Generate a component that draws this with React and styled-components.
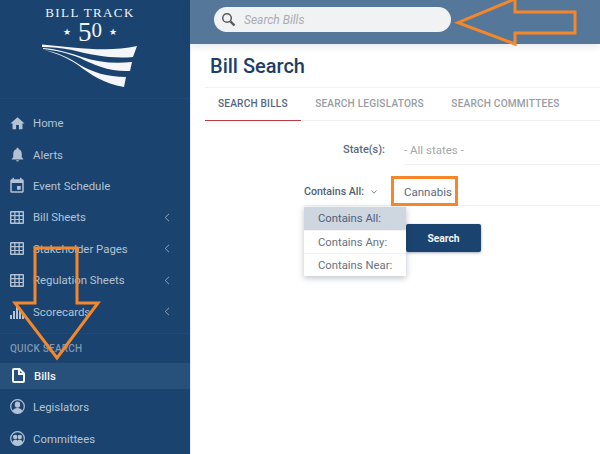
import React from 'react';
import styled, { createGlobalStyle } from 'styled-components';
import { MdHome, MdNotifications, MdEvent } from 'react-icons/md';

const GlobalStyle = createGlobalStyle`
  html, body {
    margin: 0;
    padding: 0;
    height: 454px;
    overflow: hidden;
    background: #fff;
    font-family: 'Roboto', 'Liberation Sans', sans-serif;
  }
`;

const Page = styled.div`
  position: relative;
  display: flex;
  width: 600px;
  height: 454px;
  overflow: hidden;
`;

/* SIDEBAR */
const Sidebar = styled.aside`
  flex: 0 0 190px;
  display: flex;
  flex-direction: column;
  background: #1a436f;
`;

const Logo = styled.div`
  height: 99px;
  flex: none;
  display: flex;
  flex-direction: column;
  align-items: center;
  padding: 6px 10px 0 0;
  box-sizing: border-box;
  border-bottom: 1px solid #1f4a78;
  color: #f2f5f8;
  font-family: 'Liberation Serif', serif;
`;

const LogoTitle = styled.div`
  font-size: 13px;
  line-height: 14px;
  letter-spacing: 1.4px;
`;

const LogoFifty = styled.div`
  display: flex;
  align-items: center;
  height: 24px;
  font-size: 27px;
  line-height: 24px;
`;

const LogoStar = styled.span`
  font-size: 9px;
  margin: 0 7px;
`;

const LogoZero = styled.span`
  font-size: 21px;
  margin-bottom: 4px;
`;

const Nav = styled.nav`
  flex: none;
  display: flex;
  flex-direction: column;
  padding-top: 8.6px;
`;

const NavRow = styled.div`
  height: 31.4px;
  flex: none;
  display: flex;
  align-items: center;
  padding-left: ${(p) => (p.$active ? '12px' : '10px')};
  gap: ${(p) => (p.$active ? '10px' : '9px')};
  background: ${(p) => (p.$active ? '#27507a' : 'transparent')};
  color: ${(p) => (p.$active ? '#f4f7fa' : '#b3c3d5')};
  font-size: 11.4px;
  font-weight: ${(p) => (p.$active ? 500 : 400)};
`;

const QuickRow = styled(NavRow)`
  height: ${(p) => (p.$active ? '26px' : '32px')};
  margin-bottom: ${(p) => (p.$active ? '2px' : '0')};
`;

const IconSlot = styled.span`
  flex: 0 0 ${(p) => (p.$active ? '12px' : '14px')};
  min-width: 0;
  display: flex;
  align-items: center;
  justify-content: center;

  svg {
    display: block;
    flex: none;
  }
`;

const NavLabel = styled.span`
  flex: 1;
`;

const Caret = styled.svg`
  width: 6px;
  height: 9px;
  margin-right: 20px;
  fill: none;
  stroke: #8fa6bf;
  stroke-width: 1;
`;

const Divider = styled.div`
  flex: none;
  border-top: 1px solid #21497a;
  margin-top: 5.6px;
`;

const QuickTitle = styled.div`
  height: 29px;
  flex: none;
  display: flex;
  align-items: center;
  padding-left: 10px;
  color: #7f98b3;
  font-size: 10px;
  font-weight: 500;
  letter-spacing: 0.2px;
`;

/* MAIN AREA */
const Main = styled.main`
  flex: 1;
  min-width: 0;
  display: flex;
  flex-direction: column;
  border-left: 1px solid #e4edf5;
`;

const TopBar = styled.header`
  height: 44px;
  flex: none;
  display: flex;
  align-items: center;
  padding-left: 24px;
  margin-left: -1px;
  background: #54779a;
  box-shadow: 0 2px 8px rgba(30, 50, 80, 0.12);
`;

const SearchBox = styled.div`
  width: 237px;
  height: 25px;
  margin-top: -5px;
  display: flex;
  align-items: center;
  gap: 8px;
  padding-left: 7px;
  box-sizing: border-box;
  border-radius: 13px;
  background: #f1f2f4;
  color: #a9adb2;
  font-size: 12px;
  font-style: italic;
`;

const Heading = styled.h1`
  margin: 0;
  height: 43px;
  flex: none;
  padding: 10px 0 0 19px;
  box-sizing: border-box;
  color: #1b3f69;
  font-size: 20px;
  font-weight: 500;
  line-height: 24px;
`;

const Tabs = styled.div`
  height: 34px;
  flex: none;
  display: flex;
  gap: 1.4px;
  margin-left: 14px;
  border-top: 1px solid #f2f3f5;
  border-bottom: 1px solid #eef0f2;
  box-sizing: border-box;
`;

const Tab = styled.div`
  height: 33px;
  display: flex;
  align-items: center;
  padding: 0 13px 2px;
  box-sizing: border-box;
  color: ${(p) => (p.$active ? '#52677f' : '#989ca3')};
  font-size: 10.1px;
  font-weight: 500;
  letter-spacing: 0.2px;
  border-bottom: ${(p) => (p.$active ? '1px solid #bd3b48' : 'none')};
`;

const Form = styled.div`
  display: flex;
  flex-direction: column;
  padding-left: 113px;
`;

const StateRow = styled.div`
  height: 44px;
  display: flex;
  align-items: center;
  box-sizing: border-box;
  padding-top: 14px;
  border-bottom: 1px solid transparent;
`;

const StateLabel = styled.label`
  width: 81px;
  text-align: right;
  color: #5a6b80;
  font-size: 11px;
  font-weight: 500;
`;

const StateValue = styled.div`
  flex: 1;
  align-self: stretch;
  display: flex;
  align-items: center;
  margin: -14px 0 -1px 19px;
  padding-top: 14px;
  border-bottom: 1px solid #eef0f2;
  color: #a3a7ad;
  font-size: 11.5px;
`;

const ContainsRow = styled.div`
  position: relative;
  height: 27px;
  margin-top: 13px;
  display: flex;
  align-items: center;
  border-bottom: 1px solid #eef0f2;
`;

const ContainsToggle = styled.div`
  width: 88px;
  display: flex;
  align-items: center;
  gap: 7px;
  color: #4f6178;
  font-size: 10.6px;
  font-weight: 500;
`;

const ContainsValue = styled.div`
  margin-left: 12px;
  color: #5d6b7c;
  font-size: 11.5px;
`;

const Menu = styled.ul`
  position: absolute;
  z-index: 2;
  top: 29px;
  left: 0;
  width: 102px;
  margin: 0;
  padding: 0;
  list-style: none;
  background: #fff;
  box-shadow: 0 2px 6px rgba(40, 50, 70, 0.3);
`;

const MenuItem = styled.li`
  height: 23px;
  display: flex;
  align-items: center;
  padding-left: 14px;
  box-sizing: border-box;
  background: ${(p) => (p.$selected ? '#ced6e0' : '#fff')};
  border-top: ${(p) => (p.$selected ? 'none' : '1px solid #f1f2f4')};
  color: ${(p) => (p.$selected ? '#4f6178' : '#69727f')};
  font-size: 11.3px;
`;

const SearchButton = styled.button`
  width: 75px;
  height: 28px;
  margin: 18px 0 0 102px;
  border: none;
  border-radius: 2px;
  background: #1a436f;
  box-shadow: 0 1px 3px rgba(30, 50, 80, 0.4);
  color: #f0f3f6;
  font-family: inherit;
  font-size: 10.3px;
  font-weight: 700;
`;

/* ORANGE ANNOTATIONS laid over the screenshot */
const Annotations = styled.svg`
  position: absolute;
  z-index: 3;
  inset: 0;
  width: 600px;
  height: 454px;
  pointer-events: none;
  fill: none;
  stroke: #f5872a;
  stroke-width: 3;
`;

const GridIcon = () => (
  <svg width="14" height="13" viewBox="0 0 14 13" fill="#b3c3d5">
    <path
      fillRule="evenodd"
      d="M1 0h12a1 1 0 0 1 1 1v11a1 1 0 0 1-1 1H1a1 1 0 0 1-1-1V1a1 1 0 0 1 1-1zm.4 1.4v2.7h2.8V1.4zm4.1 0v2.7h3V1.4zm4.3 0v2.7h2.8V1.4zM1.4 5.3v2.6h2.8V5.3zm4.1 0v2.6h3V5.3zm4.3 0v2.6h2.8V5.3zM1.4 9.1v2.5h2.8V9.1zm4.1 0v2.5h3V9.1zm4.3 0v2.5h2.8V9.1z"
    />
  </svg>
);

const BarsIcon = () => (
  <svg width="14" height="15" viewBox="0 0 14 15" fill="#b3c3d5">
    <path d="M0 11h2v4H0zM3 7h2v8H3zM6 0h2v15H6zM9 5h2v10H9zM12 9h2v6h-2z" />
  </svg>
);

const FileIcon = () => (
  <svg width="13" height="15" viewBox="0 0 13 15" fill="none" stroke="#f4f7fa" strokeWidth="2">
    <path d="M2 1h5.500L12 5.500V13a1 1 0 0 1-1 1H2a1 1 0 0 1-1-1V2a1 1 0 0 1 1-1z" />
    <path d="M7 1v5h5" />
  </svg>
);

const PersonIcon = () => (
  <svg width="15" height="15" viewBox="0 0 15 15">
    <circle cx="7.500" cy="7.500" r="6.800" fill="none" stroke="#b3c3d5" strokeWidth="1.200" />
    <ellipse cx="7.500" cy="5.600" rx="2.700" ry="3.200" fill="#b3c3d5" />
    <path d="M2.800 12c.6-2.300 2.600-3 4.700-3s4.100.7 4.700 3a6 6 0 0 1-9.400 0z" fill="#b3c3d5" />
  </svg>
);

const GroupIcon = () => (
  <svg width="15" height="15" viewBox="0 0 15 15">
    <circle cx="7.500" cy="7.500" r="6.800" fill="none" stroke="#b3c3d5" strokeWidth="1.200" />
    <circle cx="5.200" cy="6" r="2.200" fill="#b3c3d5" />
    <circle cx="9.800" cy="6" r="2.200" fill="#b3c3d5" />
    <path d="M2.300 11.500c.4-2 1.500-2.800 2.900-2.800s2.300.6 2.300 1.200c0-.6.900-1.200 2.300-1.200s2.500.8 2.900 2.800a6 6 0 0 1-10.400 0z" fill="#b3c3d5" />
  </svg>
);

const CaretLeft = () => (
  <Caret viewBox="0 0 6 9">
    <path d="M5 .8 1.200 4.500 5 8.200" />
  </Caret>
);

const navItems = [
  { label: 'Home', icon: <MdHome size={17} color="#b3c3d5" /> },
  { label: 'Alerts', icon: <MdNotifications size={17} color="#b3c3d5" /> },
  { label: 'Event Schedule', icon: <MdEvent size={18} color="#b3c3d5" /> },
  { label: 'Bill Sheets', icon: <GridIcon />, caret: true },
  { label: 'Stakeholder Pages', icon: <GridIcon />, caret: true },
  { label: 'Regulation Sheets', icon: <GridIcon />, caret: true },
  { label: 'Scorecards', icon: <BarsIcon />, caret: true },
];

const tabs = ['SEARCH BILLS', 'SEARCH LEGISLATORS', 'SEARCH COMMITTEES'];
const matchModes = ['Contains All:', 'Contains Any:', 'Contains Near:'];

const App = () => {
  return (
    <Page>
      <GlobalStyle />
      <Sidebar>
        <Logo>
          <LogoTitle>BILL TRACK</LogoTitle>
          <LogoFifty>
            <LogoStar>★</LogoStar>5<LogoZero>0</LogoZero>
            <LogoStar>★</LogoStar>
          </LogoFifty>
          <svg width="96" height="44" viewBox="0 0 96 44" fill="#f4f6f9">
            <path d="M0 .5C30 3 65 9 95 2l-4 11C70 15 50 11 30 6 20 4 10 3 0 3z" />
            <path d="M1 4c14 1 27 5 39 9 15 5 32 7 50 5l-2 9C68 28 52 21 38 14 26 9 12 6 1 5z" />
            <path d="M2 6c13 2 26 8 36 15 12 7 27 12 46 12l-2 10C62 40 48 30 36 21 26 14 14 9 2 6z" />
          </svg>
        </Logo>
        <Nav>
          {navItems.map((item) => (
            <NavRow key={item.label}>
              <IconSlot>{item.icon}</IconSlot>
              <NavLabel>{item.label}</NavLabel>
              {item.caret && <CaretLeft />}
            </NavRow>
          ))}
        </Nav>
        <Divider />
        <QuickTitle>QUICK SEARCH</QuickTitle>
        <QuickRow $active>
          <IconSlot $active>
            <FileIcon />
          </IconSlot>
          <NavLabel>Bills</NavLabel>
        </QuickRow>
        <QuickRow>
          <IconSlot>
            <PersonIcon />
          </IconSlot>
          <NavLabel>Legislators</NavLabel>
        </QuickRow>
        <QuickRow>
          <IconSlot>
            <GroupIcon />
          </IconSlot>
          <NavLabel>Committees</NavLabel>
        </QuickRow>
      </Sidebar>
      <Main>
        <TopBar>
          <SearchBox>
            <svg width="15" height="15" viewBox="0 0 15 15" fill="none" stroke="#555a60">
              <circle cx="6" cy="6" r="4.300" strokeWidth="1.500" />
              <path d="M9.300 9.300 13.500 13.500" strokeWidth="2.400" />
            </svg>
            Search Bills
          </SearchBox>
        </TopBar>
        <Heading>Bill Search</Heading>
        <Tabs>
          {tabs.map((tab, index) => (
            <Tab key={tab} $active={index === 0}>
              {tab}
            </Tab>
          ))}
        </Tabs>
        <Form>
          <StateRow>
            <StateLabel>State(s):</StateLabel>
            <StateValue>- All states -</StateValue>
          </StateRow>
          <ContainsRow>
            <ContainsToggle>
              Contains All:
              <svg width="6" height="4" viewBox="0 0 6 4" fill="none" stroke="#5a6b80" strokeWidth="0.8">
                <path d="M.5.5 3 3.200 5.500.5" />
              </svg>
            </ContainsToggle>
            <ContainsValue>Cannabis</ContainsValue>
            <Menu>
              {matchModes.map((mode, index) => (
                <MenuItem key={mode} $selected={index === 0}>
                  {mode}
                </MenuItem>
              ))}
            </Menu>
          </ContainsRow>
          <SearchButton>Search</SearchButton>
        </Form>
      </Main>
      <Annotations viewBox="0 0 600 454">
        <path d="M458 22.700 515 -1V12H575V33H515V44z" />
        <path d="M35 248H77V303H98L57 358 15 303H35z" />
        <rect x="392.500" y="177.500" width="64" height="27" />
      </Annotations>
    </Page>
  );
};

export default App;
